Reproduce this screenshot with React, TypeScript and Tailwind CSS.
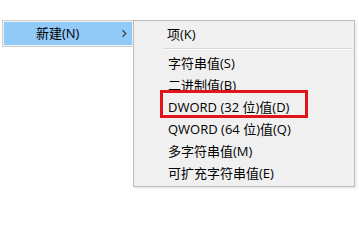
const items = [
  '字符串值(S)',
  '二进制值(B)',
  'DWORD (32 位)值(D)',
  'QWORD (64 位)值(Q)',
  '多字符串值(M)',
  '可扩充字符串值(E)',
];

function Chevron() {
  return (
    <svg width="6" height="9" viewBox="0 0 6 9" className="shrink-0">
      <path d="M1.5 1.2l3.2 3.3-3.2 3.3" fill="none" stroke="#3a3a3a" strokeWidth="1.2" />
    </svg>
  );
}

export default function App() {
  return (
    <div
      className="relative h-[204px] w-[359px] overflow-hidden bg-white text-[13px] text-black"
      style={{ fontFamily: '"Open Sans", "Noto Sans CJK SC", sans-serif' }}
    >
      <div className="flex items-start pl-[2px] pt-[20px]">
        {/* parent menu, only the hovered row is visible */}
        <div className="w-[132px] border border-[#cfcfcf] bg-[#f0f0f0] p-px">
          <div className="flex h-[23px] items-center bg-[#91c9f7] pl-[32px] pr-[5px] leading-none">
            <span className="flex-1">新建(N)</span>
            <Chevron />
          </div>
        </div>

        {/* submenu */}
        <div className="-ml-px w-[222px] border border-[#bdbdbd] bg-[#f0f0f0] py-[2px] shadow-[2px_2px_2px_rgba(0,0,0,0.08)]">
          <div className="flex h-[22px] items-center pl-[33px] leading-none">项(K)</div>
          <div className="flex h-[7px] flex-col justify-center pl-[29px] pr-px">
            <div className="h-px bg-[#d7d7d7]" />
            <div className="h-px bg-[#fbfbfb]" />
          </div>
          {items.map(label => (
            <div key={label} className="flex h-[22px] items-center pl-[34px] leading-none">
              {label}
            </div>
          ))}
        </div>
      </div>

      {/* annotation box */}
      <div className="absolute left-[160px] top-[90px] h-[28px] w-[148px] border-[3px] border-[#e3131b]" />
    </div>
  );
}
